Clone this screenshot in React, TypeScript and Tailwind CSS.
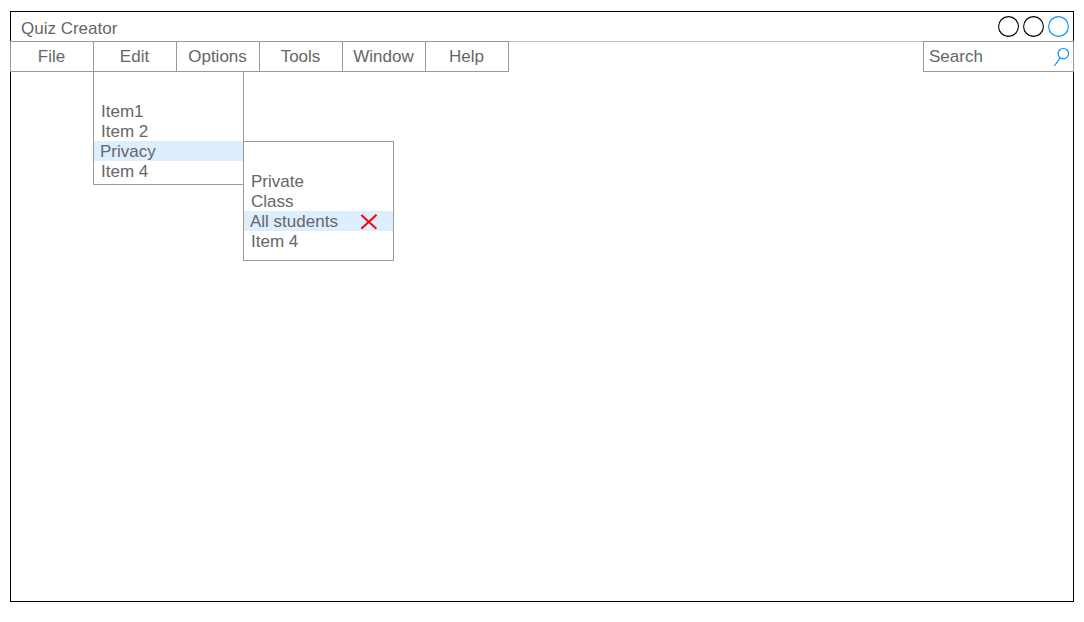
import React from "react";

const menus = ["File", "Edit", "Options", "Tools", "Window", "Help"];

const windowControls = [
  { label: "Minimize", color: "text-black" },
  { label: "Maximize", color: "text-black" },
  { label: "Close", color: "text-[#0a8cff]" },
];

function MenuItem({
  label,
  active = false,
  icon,
  children,
}: {
  label: string;
  active?: boolean;
  icon?: React.ReactNode;
  children?: React.ReactNode;
}) {
  return (
    <li role="none" className="relative">
      <button
        type="button"
        role="menuitem"
        className={
          active
            ? "flex h-5 w-full items-center justify-between bg-[#ddeeff] pt-0.5 pr-4 pl-1.5 text-left"
            : "flex h-5 w-full items-center pt-0.5 pl-[7px] text-left hover:bg-[#ddeeff]"
        }
      >
        {label}
        {icon}
      </button>
      {children}
    </li>
  );
}

function CrossIcon() {
  return (
    <svg width="17" height="16" viewBox="0 0 17 16" fill="none" stroke="#ff0000" strokeWidth="2" aria-hidden="true">
      <path d="M1.3 1 16.5 14.8M16.5 0.8 1.3 14.8" />
    </svg>
  );
}

function EditMenu() {
  return (
    <ul role="menu" aria-label="Edit" className="absolute top-full -left-px w-[151px] border border-[#999] bg-white pt-[29px] pb-[3px]">
      <MenuItem label="Item1" />
      <MenuItem label="Item 2" />
      <MenuItem label="Privacy" active>
        <ul role="menu" aria-label="Privacy" className="absolute top-0 left-full w-[151px] border border-[#999] bg-white pt-[29px] pb-[9px]">
          <MenuItem label="Private" />
          <MenuItem label="Class" />
          <MenuItem label="All students" active icon={<CrossIcon />} />
          <MenuItem label="Item 4" />
        </ul>
      </MenuItem>
      <MenuItem label="Item 4" />
    </ul>
  );
}

export default function App() {
  return (
    <div className="flex min-h-screen flex-col bg-white px-2.5 pt-[11px] pb-5 font-['Liberation_Sans',Arial,sans-serif] text-[17px] leading-5 text-[#666]">
      <main className="flex flex-1 flex-col border border-black">
        <header className="flex h-[29px] items-center justify-between pr-1 pl-2.5">
          <h1 className="pt-1">Quiz Creator</h1>
          <div className="flex gap-1">
            {windowControls.map((control) => (
              <button key={control.label} type="button" aria-label={control.label} className={control.color}>
                <svg width="21" height="21" viewBox="0 0 21 21" fill="none" stroke="currentColor" strokeWidth="1.1" className="block">
                  <circle cx="10.5" cy="10.5" r="9.9" />
                </svg>
              </button>
            ))}
          </div>
        </header>

        <div className="-mx-px flex h-[31px] justify-between bg-[linear-gradient(#c0c0c0_1px,transparent_1px)]">
          <nav aria-label="Main menu" className="flex">
            <ul role="menubar" className="flex">
              {menus.map((menu) => (
                <li key={menu} role="none" className="relative -mr-px w-[84px] border border-[#999] bg-white">
                  <button type="button" role="menuitem" className="block h-full w-full pr-px text-center">
                    {menu}
                  </button>
                  {menu === "Edit" && <EditMenu />}
                </li>
              ))}
            </ul>
          </nav>
          <div className="flex w-[151px] items-center border border-[#999] bg-white pr-1 pl-[5px]">
            <input
              type="text"
              aria-label="Search"
              placeholder="Search"
              className="h-full w-full min-w-0 flex-1 bg-transparent outline-none placeholder:text-[#666]"
            />
            <svg width="16" height="20" viewBox="0 0 16 20" fill="none" stroke="#0a8cff" strokeWidth="1.2" className="shrink-0" aria-hidden="true">
              <circle cx="10.3" cy="6.7" r="5.2" />
              <path d="M7.2 10.9 1.3 19" />
            </svg>
          </div>
        </div>
      </main>
    </div>
  );
}
